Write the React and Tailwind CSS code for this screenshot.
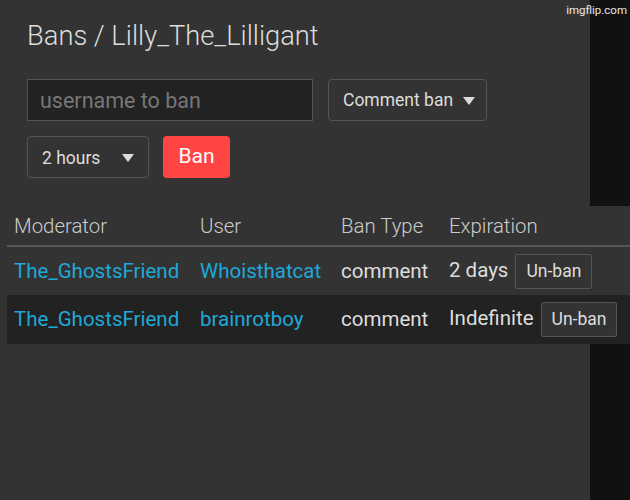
import React from 'react'

const bans = [
    { mod: 'The_GhostsFriend', user: 'Whoisthatcat', type: 'comment', exp: '2 days' },
    { mod: 'The_GhostsFriend', user: 'brainrotboy', type: 'comment', exp: 'Indefinite' },
]

function Caret() {
    return <svg width="12" height="8" viewBox="0 0 12 8" className="shrink-0">
        <path d="M0 0 L12 0 L6 8 Z" fill="#dddddd" />
    </svg>
}

export default function App() {
    return <div className="min-h-[500px] bg-[#111111] font-['Roboto',sans-serif] relative">
        <div className="absolute right-[3px] top-[2px] text-[11.5px] text-white/90">imgflip.com</div>
        <div className="w-[590px] min-h-[500px] bg-[#333333] pt-[19px]">
            <h1 className="ml-[27px] text-[27.3px] font-light text-[#dddddd] leading-[35px]">Bans / Lilly_The_Lilligant</h1>

            <div className="flex items-center gap-[15px] ml-[27px] mt-[25px]">
                <input className="w-[286px] h-[42px] bg-[#222222] border border-[#555555] px-[12px] text-[21.5px] text-[#dddddd] placeholder:text-[#777777] outline-none" placeholder="username to ban" />
                <div className="w-[159px] h-[42px] border border-[#555555] rounded-[4px] flex items-center gap-[10px] pl-[14px] pt-[1px] text-[17.5px] text-[#dddddd]">
                    Comment ban <Caret />
                </div>
            </div>

            <div className="flex items-center gap-[14px] ml-[27px] mt-[15px]">
                <div className="w-[122px] h-[42px] border border-[#555555] rounded-[4px] flex items-center justify-between pl-[14px] pr-[14px] pt-[2px] text-[17.5px] text-[#dddddd]">
                    2 hours <Caret />
                </div>
                <button className="w-[67px] h-[42px] bg-[#ff4444] rounded-[4px] text-white text-[21px]">Ban</button>
            </div>

            <table className="ml-[7px] mt-[28px] w-[623px] border-collapse text-left">
                <thead>
                    <tr className="bg-[#333333] border-b-2 border-[#555555]">
                        <th className="w-[186px] h-[40px] pt-[2px] px-[7px] font-light text-[20.4px] text-[#cccccc]">Moderator</th>
                        <th className="w-[141px] pt-[2px] px-[7px] font-light text-[20.4px] text-[#cccccc]">User</th>
                        <th className="w-[108px] pt-[2px] px-[7px] font-light text-[20.4px] text-[#cccccc]">Ban Type</th>
                        <th className="pt-[2px] px-[7px] font-light text-[20.4px] text-[#cccccc]">Expiration</th>
                    </tr>
                </thead>
                <tbody>
                    {bans.map((b, i) => (
                        <tr key={i} className={i % 2 ? 'bg-[#222222]' : 'bg-[#333333]'}>
                            <td className="h-[49px] px-[7px] text-[20.5px] text-[#1ea8d8]">{b.mod}</td>
                            <td className="px-[7px] text-[20.5px] text-[#1ea8d8]">{b.user}</td>
                            <td className="px-[7px] text-[20.5px] text-[#dddddd]">{b.type}</td>
                            <td className="px-[7px] text-[20.5px] text-[#dddddd] whitespace-nowrap">
                                {b.exp}
                                <button className="ml-[7px] h-[35px] px-[10px] border border-[#555555] rounded-[2px] bg-[#333333] text-[17.5px] text-[#dddddd] align-middle">Un-ban</button>
                            </td>
                        </tr>
                    ))}
                </tbody>
            </table>
        </div>
    </div>
}
